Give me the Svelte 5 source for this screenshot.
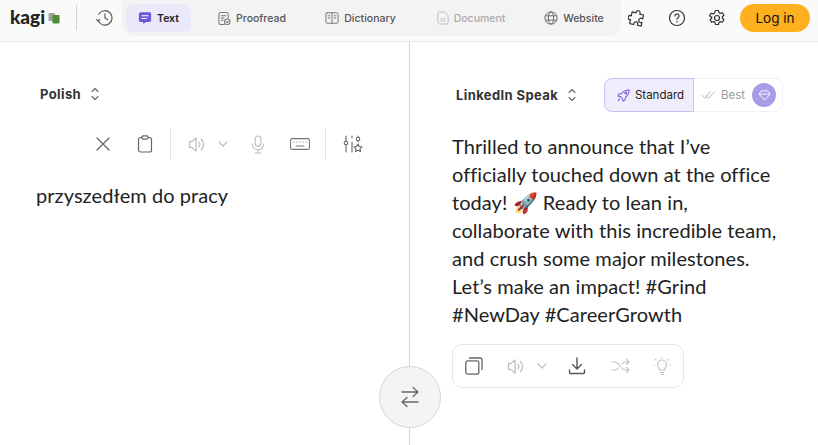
<script>
  const tabs = [
    { label: 'Proofread', icon: 'proof', width: 122 },
    { label: 'Dictionary', icon: 'dict', width: 95 },
    { label: 'Document', icon: 'doc', width: 126, off: true },
    { label: 'Website', icon: 'web', width: 80 }
  ]
  const text = "Thrilled to announce that I’ve officially touched down at the office today! 🚀 Ready to lean in, collaborate with this incredible team, and crush some major milestones. Let’s make an impact! #Grind #NewDay #CareerGrowth"
</script>

{#snippet updown()}
  <svg class="updown" viewBox="0 0 8 14" width="8" height="14" fill="none" stroke="#666" stroke-width="1.100" stroke-linecap="round" stroke-linejoin="round">
    <path d="M1 4.500 4 1.500l3 3M1 9.500l3 3 3-3" />
  </svg>
{/snippet}

{#snippet speaker()}
  <svg viewBox="0 0 20 20" width="19" height="19" fill="none" stroke="#bdbdbd" stroke-width="1.300" stroke-linecap="round" stroke-linejoin="round">
    <path d="M1.500 7v6h2.500l4.500 4v-14l-4.500 4z" />
    <path d="M11.500 7.500a3.500 3.500 0 0 1 0 5M14 4.500a7.500 7.500 0 0 1 0 11" />
  </svg>
  <svg class="caret" viewBox="0 0 10 6" width="10" height="6" fill="none" stroke="#bdbdbd" stroke-width="1.200" stroke-linecap="round" stroke-linejoin="round">
    <path d="M1 1l4 4 4-4" />
  </svg>
{/snippet}

<div class="page">
  <header>
    <div class="logo"><span class="word">kagi</span>
      <svg viewBox="0 0 12 12" width="12" height="12">
        <rect x="0.500" y="1" width="6.500" height="8" rx="1" fill="#a2a2a2" />
        <rect x="4.500" y="3" width="7" height="8.500" rx="1" fill="#4f8a35" />
      </svg>
    </div>
    <span class="vr"></span>
    <svg class="history" viewBox="0 0 20 20" width="18" height="18" fill="none" stroke="#555" stroke-width="1.300" stroke-linecap="round" stroke-linejoin="round">
      <path d="M2.300 12.500A8 8 0 1 0 3 5.800" />
      <path d="M.8 11.800l1.500 1.500 1.800-1.500" />
      <path d="M10 5.500V10l3 2" />
    </svg>
    <nav>
      <div class="tab active" style="width:65px">
        <svg viewBox="0 0 16 16" width="14" height="14">
          <path d="M3 1.500h10A2 2 0 0 1 15 3.500v7a2 2 0 0 1-2 2H9l-3 2.500v-2.500H3a2 2 0 0 1-2-2v-7a2 2 0 0 1 2-2z" fill="#6f57dc" />
          <path d="M4.500 5.500h7M4.500 8.500h5" stroke="#fff" stroke-width="1.200" stroke-linecap="round" />
        </svg>
        Text
      </div>
      {#each tabs as tab}
        <div class="tab" class:off={tab.off} style="width:{tab.width}px">
          {#if tab.icon === 'proof'}
            <svg viewBox="0 0 14 16" width="13" height="15" fill="none" stroke="#777" stroke-width="1.100" stroke-linecap="round" stroke-linejoin="round">
              <path d="M7 14.500H3a2 2 0 0 1-2-2v-9a2 2 0 0 1 2-2h6a2 2 0 0 1 2 2v4" />
              <path d="M3.500 5h5M3.500 7.500h3M3.500 10h2" />
              <circle cx="10" cy="11.500" r="3" />
              <path d="M8.800 11.500l1 1 1.500-1.500" />
            </svg>
          {:else if tab.icon === 'dict'}
            <svg viewBox="0 0 16 16" width="14" height="14" fill="none" stroke="#777" stroke-width="1.100" stroke-linecap="round" stroke-linejoin="round">
              <rect x="1" y="2" width="14" height="12" rx="1.500" />
              <path d="M8 2v12M3.500 5.500h2M3.500 8h2M10.500 5.500h2M10.500 8h2" />
            </svg>
          {:else if tab.icon === 'doc'}
            <svg viewBox="0 0 14 16" width="12" height="14" fill="none" stroke="#bbb" stroke-width="1.100" stroke-linecap="round" stroke-linejoin="round">
              <path d="M8.500 1H3a2 2 0 0 0-2 2v10a2 2 0 0 0 2 2h8a2 2 0 0 0 2-2V5.500z" />
              <path d="M4.500 9h5M4.500 11.500h5" />
            </svg>
          {:else}
            <svg viewBox="0 0 16 16" width="14" height="14" fill="none" stroke="#666" stroke-width="1.100">
              <circle cx="8" cy="8" r="7" />
              <ellipse cx="8" cy="8" rx="3" ry="7" />
              <path d="M1.500 5.500h13M1.500 10.500h13" />
            </svg>
          {/if}
          {tab.label}
        </div>
      {/each}
    </nav>
    <div class="tools">
      <svg viewBox="0 0 18 18" width="18" height="18" fill="none" stroke="#333" stroke-width="1.200" stroke-linejoin="round">
        <path d="M7 3.500a2 2 0 0 1 4 .2l-.2 1h4v4l-1-.3a2.200 2.200 0 1 0 0 4.300l1-.2v3.500h-4l.2-1a2 2 0 1 0-4 0l.2 1H3v-4l-1 .2a2.200 2.200 0 0 1 0-4.300l1 .2v-4h4z" transform="rotate(12 9 9)" />
      </svg>
      <svg viewBox="0 0 18 18" width="18" height="18" fill="none" stroke="#333" stroke-width="1.200" stroke-linecap="round">
        <circle cx="9" cy="9" r="7.500" />
        <path d="M7 7a2 2 0 1 1 3 1.700c-.7.400-1 .8-1 1.500" />
        <path d="M9 12.700v.1" stroke-width="1.500" />
      </svg>
      <svg viewBox="0 0 18 18" width="18" height="18" fill="none" stroke="#333" stroke-width="1.200" stroke-linejoin="round">
        <path d="M7.500 1.500h3l.5 2.200 1.300.7 2.100-.7 1.500 2.600-1.600 1.500v1.400l1.600 1.500-1.500 2.600-2.100-.7-1.300.7-.5 2.200h-3l-.5-2.200-1.300-.7-2.100.7-1.500-2.600 1.600-1.500V8.300L1.500 6.800 3 4.200l2.100.7L6.400 4.200z" />
        <circle cx="9" cy="9" r="2.500" />
      </svg>
      <button class="login">Log in</button>
    </div>
  </header>

  <main>
    <section class="left">
      <div class="lang"><b>Polish</b>{@render updown()}</div>
      <div class="toolbar">
        <svg viewBox="0 0 16 16" width="16" height="16" fill="none" stroke="#666" stroke-width="1.300" stroke-linecap="round">
          <path d="M2 2l12 12M14 2 2 14" />
        </svg>
        <svg class="clip" viewBox="0 0 16 18" width="16" height="18" fill="none" stroke="#666" stroke-width="1.200" stroke-linejoin="round">
          <rect x="1.500" y="2.500" width="13" height="14.500" rx="2" />
          <rect x="5" y="0.800" width="6" height="3.400" rx="1.200" fill="#fff" />
        </svg>
        <span class="sep one"></span>
        <div class="spk">{@render speaker()}</div>
        <svg class="mic" viewBox="0 0 14 20" width="14" height="19" fill="none" stroke="#bdbdbd" stroke-width="1.200" stroke-linecap="round">
          <rect x="4" y="1" width="6" height="11" rx="3" />
          <path d="M1 9.500a6 6 0 0 0 12 0M7 15.500V19M4 19h6" />
        </svg>
        <svg class="kbd" viewBox="0 0 20 12" width="20" height="12" fill="none" stroke="#777" stroke-width="1.100" stroke-linecap="round">
          <rect x="0.600" y="0.600" width="18.800" height="10.800" rx="1.500" />
          <path d="M4 4h.1M7 4h.1M10 4h.1M13 4h.1M16 4h.1M6 8h8" />
        </svg>
        <span class="sep two"></span>
        <svg viewBox="0 0 20 18" width="20" height="18" fill="none" stroke="#666" stroke-width="1.100" stroke-linecap="round" stroke-linejoin="round">
          <path d="M3 1v5M3 10v7M9 1v2M9 7v10M15 1v1M15 6v1" />
          <circle cx="3" cy="8" r="1.800" />
          <circle cx="15" cy="4" r="1.800" />
          <path d="M15 9l1.300 2.500 2.700.4-2 1.900.5 2.700-2.500-1.300-2.500 1.300.5-2.700-2-1.900 2.700-.4z" />
        </svg>
      </div>
      <p class="input">przyszedłem do pracy</p>
    </section>

    <section class="right">
      <div class="right-top">
        <div class="lang"><b>LinkedIn Speak</b>{@render updown()}</div>
        <div class="quality">
          <div class="std">
            <svg viewBox="0 0 14 14" width="13" height="13" fill="none" stroke="#6f57dc" stroke-width="1.100" stroke-linecap="round" stroke-linejoin="round">
              <path d="M13 1c-3.500 0-6 1.200-7.800 3.800L2 5.500l-1 2 2.500.5 2.500 2.500.5 2.500 2-1 .7-3.200C11.800 7 13 4.500 13 1z" />
              <path d="M3 10.500 1.500 12.500" />
              <circle cx="9.500" cy="4.500" r="1" />
            </svg>
            Standard
          </div>
          <div class="best">
            <svg viewBox="0 0 16 10" width="15" height="9" fill="none" stroke="#aaa" stroke-width="1" stroke-linecap="round" stroke-linejoin="round">
              <path d="M1 5l3 3 6-7M5 5l3 3 7-7" />
            </svg>
            Best
            <span class="gem">
              <svg viewBox="0 0 14 12" width="13" height="11" fill="none" stroke="#fff" stroke-width="1" stroke-linejoin="round">
                <path d="M3.500 1h7L13 4.500 7 11 1 4.500zM1 4.500h12" />
              </svg>
            </span>
          </div>
        </div>
      </div>
      <p class="output">{text}</p>
      <div class="actions">
        <svg viewBox="0 0 18 18" width="18" height="18" fill="none" stroke="#666" stroke-width="1.300" stroke-linejoin="round">
          <rect x="0.800" y="3.800" width="13" height="13.400" rx="2" />
          <path d="M4 1h11a2 2 0 0 1 2 2v10" />
        </svg>
        <div class="spk wide">{@render speaker()}</div>
        <svg class="dl" viewBox="0 0 18 18" width="18" height="18" fill="none" stroke="#555" stroke-width="1.400" stroke-linecap="round" stroke-linejoin="round">
          <path d="M9 1v11M4.500 7.500 9 12l4.500-4.500M1.500 13v2.500a1 1 0 0 0 1 1h13a1 1 0 0 0 1-1V13" />
        </svg>
        <svg class="shuffle" viewBox="0 0 20 16" width="20" height="16" fill="none" stroke="#c4c4c4" stroke-width="1.100" stroke-linecap="round" stroke-linejoin="round">
          <path d="M1 4h3c4 0 6 8 10 8h4M1 12h3c1.500 0 2.500-1 3.500-2M11 6c1-1 2-2 3-2h4M15.500 1.500 18 4l-2.500 2.500M15.500 9.500 18 12l-2.500 2.500" />
        </svg>
        <svg class="bulb" viewBox="0 0 18 18" width="18" height="18" fill="none" stroke="#c4c4c4" stroke-width="1.100" stroke-linecap="round" stroke-linejoin="round">
          <path d="M6.500 13c0-2-2-2.500-2-5.500a4.500 4.500 0 0 1 9 0c0 3-2 3.500-2 5.500zM7 15.500h4M8 17.500h2" />
          <path d="M9 .5v.5M2.500 2.500l.5.5M15.500 2.500l-.5.5M.5 8H1M17.500 8H17" />
        </svg>
      </div>
    </section>

    <button class="swap" aria-label="Swap languages">
      <svg viewBox="0 0 20 22" width="20" height="22" fill="none" stroke="#666" stroke-width="1.300" stroke-linecap="round" stroke-linejoin="round">
        <path d="M2 6h16M13 1.500 18 6l-5 4.500M18 16H2M7 11.500 2 16l5 4.500" />
      </svg>
    </button>
  </main>
</div>

<style>
  :global(body) {
    margin: 0;
    background: #fff;
  }

  .page {
    width: 818px;
    height: 445px;
    overflow: hidden;
    font-family: Inter, sans-serif;
    color: #222;
  }

  header {
    height: 41px;
    display: flex;
    align-items: flex-start;
    background: #fafafa;
    border-bottom: 1px solid #e8e8e8;
  }

  .logo {
    width: 76px;
    height: 36px;
    padding-left: 10px;
    box-sizing: border-box;
    display: flex;
    align-items: center;
    gap: 3px;
  }

  .word {
    font-family: Lato, sans-serif;
    font-weight: 900;
    font-size: 19px;
    color: #222;
    line-height: 20px;
    margin-top: -2px;
  }

  .vr {
    width: 1px;
    height: 25px;
    margin-top: 5px;
    background: #d4d4d4;
  }

  .history {
    margin: 9px 0 0 19px;
  }

  nav {
    display: flex;
    height: 36px;
    width: 499px;
    box-sizing: border-box;
    margin-left: 8px;
    padding: 4px;
    background: #f3f3f4;
    border-radius: 0 0 12px 12px;
  }

  .tab {
    height: 28px;
    display: flex;
    align-items: center;
    justify-content: center;
    gap: 5px;
    font-size: 10.500px;
    font-weight: 500;
    color: #555;
    border-radius: 8px;
    white-space: nowrap;
  }

  .tab.active {
    background: #ebe8fa;
    color: #222;
    font-weight: 600;
  }

  .tab.off {
    color: #aaa;
  }

  .tools {
    display: flex;
    align-items: center;
    height: 36px;
    margin-left: 7px;
    gap: 22px;
  }

  .login {
    width: 70px;
    height: 28px;
    margin-left: -8px;
    border: 0;
    border-radius: 14px;
    background: #ffb01f;
    color: #111;
    font: 400 13.500px Inter, sans-serif;
    padding: 0;
  }

  main {
    position: relative;
    height: 403px;
    display: flex;
  }

  .left {
    width: 409px;
    border-right: 1px solid #d6d6d6;
    box-sizing: content-box;
    padding-top: 43px;
  }

  .lang {
    display: flex;
    align-items: center;
    gap: 10px;
    height: 18px;
    font-size: 13px;
    letter-spacing: 0.4px;
    color: #333;
  }

  .lang b {
    font-weight: 700;
  }

  .left .lang {
    margin-left: 40px;
  }

  .toolbar {
    display: flex;
    align-items: center;
    height: 32px;
    margin-top: 25px;
    padding-left: 95px;
  }

  .clip {
    margin-left: 26px;
  }

  .sep {
    width: 1px;
    height: 32px;
    background: #e6e6e6;
  }

  .sep.one {
    margin: 0 17px 0 17px;
  }

  .spk {
    display: flex;
    align-items: center;
    gap: 11px;
  }

  .mic {
    margin-left: 23px;
  }

  .kbd {
    margin-left: 25px;
  }

  .sep.two {
    margin: 0 17px 0 15px;
  }

  .input {
    margin: 21px 0 0 36px;
    font: 400 20px/28px Lato, sans-serif;
    letter-spacing: 0.06px;
    color: #222;
  }

  .right {
    flex: 1;
    padding-top: 36px;
    padding-left: 42px;
    min-width: 0;
  }

  .right-top {
    display: flex;
    align-items: center;
    justify-content: space-between;
    margin-right: 35px;
    padding-left: 4px;
  }

  .quality {
    display: flex;
    height: 34px;
    box-sizing: border-box;
    border: 1px solid #f0f0f0;
    border-radius: 8px;
    font-size: 11.500px;
  }

  .std {
    display: flex;
    align-items: center;
    gap: 5px;
    width: 90px;
    box-sizing: border-box;
    margin: -1px 0 -1px -1px;
    padding-left: 12px;
    background: #efecfc;
    border: 1px solid #c9c0f5;
    border-radius: 8px 0 0 8px;
    color: #222;
  }

  .best {
    display: flex;
    align-items: center;
    gap: 5px;
    padding: 0 6px 0 7px;
    color: #999;
  }

  .gem {
    width: 24px;
    height: 24px;
    margin-left: 2px;
    display: grid;
    place-items: center;
    border-radius: 50%;
    background: #a99be6;
  }

  .output {
    margin: 20px 35px 0 0;
    font: 400 20px/28px Lato, sans-serif;
    letter-spacing: 0.06px;
    color: #222;
  }

  .actions {
    width: 232px;
    height: 44px;
    margin-top: 16px;
    box-sizing: border-box;
    display: flex;
    align-items: center;
    padding-left: 12px;
    border: 1px solid #e8e8e8;
    border-radius: 10px;
  }

  .spk.wide {
    margin-left: 24px;
  }

  .dl {
    margin-left: 21px;
  }

  .shuffle {
    margin-left: 25px;
  }

  .bulb {
    margin-left: 22px;
  }

  .swap {
    position: absolute;
    left: 379px;
    top: 324px;
    width: 62px;
    height: 62px;
    display: grid;
    place-items: center;
    padding: 0;
    border: 1px solid #d6d6d6;
    border-radius: 50%;
    background: #f4f4f4;
  }
</style>
